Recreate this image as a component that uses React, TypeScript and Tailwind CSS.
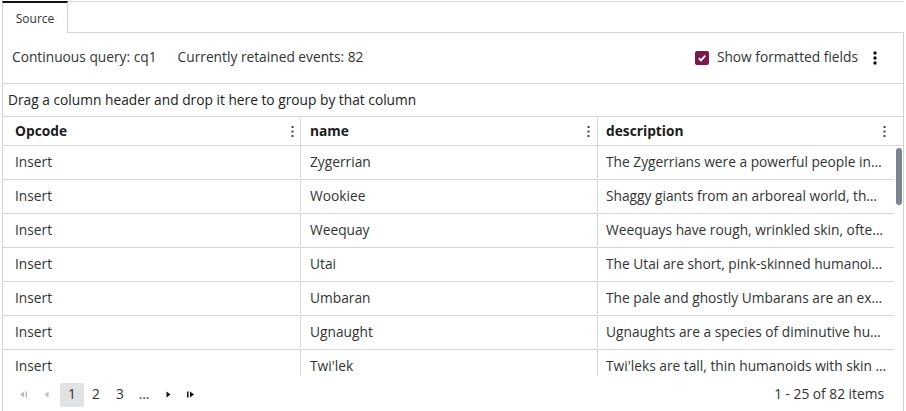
import React from "react";

type Row = { opcode: string; name: string; description: string };

const rows: Row[] = [
  { opcode: "Insert", name: "Zygerrian", description: "The Zygerrians were a powerful people in…" },
  { opcode: "Insert", name: "Wookiee", description: "Shaggy giants from an arboreal world, th…" },
  { opcode: "Insert", name: "Weequay", description: "Weequays have rough, wrinkled skin, ofte…" },
  { opcode: "Insert", name: "Utai", description: "The Utai are short, pink-skinned humanoi…" },
  { opcode: "Insert", name: "Umbaran", description: "The pale and ghostly Umbarans are an ex…" },
  { opcode: "Insert", name: "Ugnaught", description: "Ugnaughts are a species of diminutive hu…" },
  { opcode: "Insert", name: "Twi'lek", description: "Twi'leks are tall, thin humanoids with skin …" },
];

const Kebab = ({ big = false }: { big?: boolean }) => (
  <svg width={big ? 4 : 3} height={big ? 14 : 11} viewBox={big ? "0 0 4 14" : "0 0 3 11"}>
    {big ? (
      <>
        <circle cx="2" cy="2" r="1.7" fill="#111" />
        <circle cx="2" cy="7" r="1.7" fill="#111" />
        <circle cx="2" cy="12" r="1.7" fill="#111" />
      </>
    ) : (
      <>
        <rect x="0.5" y="0" width="2" height="2" fill="#444" />
        <rect x="0.5" y="4.5" width="2" height="2" fill="#444" />
        <rect x="0.5" y="9" width="2" height="2" fill="#444" />
      </>
    )}
  </svg>
);

export default function App() {
  return (
    <div
      className="w-[906px] h-[411px] bg-white overflow-hidden text-[13.75px] text-[#333]"
      style={{ fontFamily: "'Open Sans', 'Noto Sans', sans-serif" }}
    >
      {/* tab strip */}
      <div className="flex pt-px pl-[2px] h-[33px]">
        <div className="w-[66px] pt-px border-t-2 border-t-[#111] border-l border-r border-[#cfd3d8] flex items-center justify-center text-[12px] text-[#333]">
          Source
        </div>
        <div className="flex-1 border-t border-b border-[#d3d6db] mr-[2px]" />
      </div>

      <div className="ml-[2px] w-[902px] h-[378px] border-l border-r border-[#cfd3d8] flex flex-col">
        {/* toolbar */}
        <div className="h-[51px] shrink-0 flex items-center border-b border-[#d3d6db] pl-[9px] pr-[26px] pb-px">
          <span>Continuous query: cq1</span>
          <span className="ml-[21px]">Currently retained events: 82</span>
          <div className="ml-auto flex items-center">
            <span className="w-[14px] h-[14px] rounded-[2px] bg-[#7b1b4c] flex items-center justify-center">
              <svg width="10" height="10" viewBox="0 0 10 10">
                <path d="M1.8 5.2 L4 7.4 L8.3 2.6" stroke="#fff" strokeWidth="1.8" fill="none" />
              </svg>
            </span>
            <span className="ml-[8px]">Show formatted fields</span>
            <span className="ml-[15px] flex">
              <Kebab big />
            </span>
          </div>
        </div>

        {/* group panel */}
        <div className="h-[33px] shrink-0 flex items-center border-b border-[#d3d6db] pl-[5px] text-[#222]">
          Drag a column header and drop it here to group by that column
        </div>

        {/* header */}
        <div className="h-[29px] shrink-0 flex border-b border-[#d3d6db]">
          <div className="w-[298px] flex items-center justify-between pl-[12px] pr-[6px] border-r border-[#d3d6db]">
            <span className="font-bold text-[#1b1b1b]">Opcode</span>
            <Kebab />
          </div>
          <div className="w-[297px] flex items-center justify-between pl-[9px] pr-[7px] border-r border-[#d3d6db]">
            <span className="font-bold text-[#1b1b1b]">name</span>
            <Kebab />
          </div>
          <div className="flex-1 flex items-center justify-between pl-[8px] pr-[17px]">
            <span className="font-bold text-[#1b1b1b]">description</span>
            <Kebab />
          </div>
        </div>

        {/* body */}
        <div className="h-[230px] shrink-0 flex overflow-hidden">
          <div className="w-[891px]">
            {rows.map((r, i) => (
              <div key={i} className="h-[34px] flex border-b border-[#d3d6db] pb-px">
                <div className="w-[298px] border-r border-[#d3d6db] pl-[12px] flex items-center">{r.opcode}</div>
                <div className="w-[297px] border-r border-[#d3d6db] pl-[9px] flex items-center">{r.name}</div>
                <div className="flex-1 pl-[8px] pr-[6px] flex items-center whitespace-nowrap overflow-hidden">
                  {r.description}
                </div>
              </div>
            ))}
          </div>
          <div className="flex-1 pt-[2px] pl-[2px]">
            <div className="w-[6px] h-[57px] rounded-full bg-[#7c8693]" />
          </div>
        </div>

        {/* pager */}
        <div className="flex-1 flex items-center pt-[2px] pl-[13px] pr-[19px]">
          <div className="flex items-center text-[#333]">
            <span className="w-[16px] flex justify-center">
              <svg width="8" height="7" viewBox="0 0 8 7">
                <path d="M0 3.5 L4 0.5 L4 6.5 Z" fill="#b9bdc3" />
                <rect x="5.5" y="0.5" width="1.5" height="6" fill="#b9bdc3" />
              </svg>
            </span>
            <span className="w-[28px] flex justify-center">
              <svg width="5" height="7" viewBox="0 0 5 7">
                <path d="M0.5 3.5 L4.5 0.5 L4.5 6.5 Z" fill="#b9bdc3" />
              </svg>
            </span>
            <span className="w-[24px] h-[24px] rounded-[2px] bg-[#e1e2e4] flex items-center justify-center">1</span>
            <span className="w-[24px] flex justify-center">2</span>
            <span className="w-[24px] flex justify-center">3</span>
            <span className="w-[24px] flex justify-center">…</span>
            <span className="w-[24px] flex justify-center">
              <svg width="5" height="7" viewBox="0 0 5 7">
                <path d="M4.5 3.5 L0.5 0.5 L0.5 6.5 Z" fill="#111" />
              </svg>
            </span>
            <span className="w-[20px] flex justify-center">
              <svg width="8" height="7" viewBox="0 0 8 7">
                <rect x="1" y="0.5" width="1.5" height="6" fill="#111" />
                <path d="M8 3.5 L4 0.5 L4 6.5 Z" fill="#111" />
              </svg>
            </span>
          </div>
          <span className="ml-auto">1 - 25 of 82 items</span>
        </div>
      </div>
    </div>
  );
}
